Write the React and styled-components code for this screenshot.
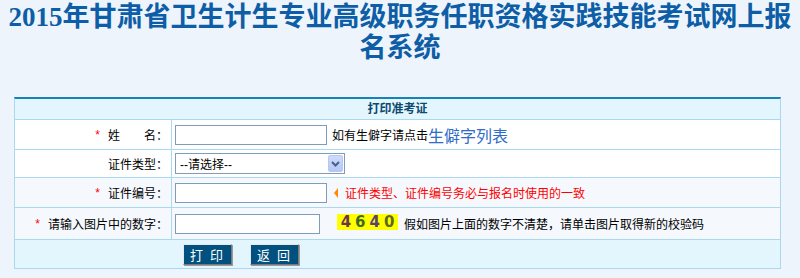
import styled, { createGlobalStyle } from "styled-components";

const GlobalStyle = createGlobalStyle`
  body {
    margin: 0;
    background: #edf4fb;
    font-family: "Liberation Sans", "Noto Sans CJK SC", sans-serif;
    font-size: 12px;
    color: #000;
  }
`;

const App = () => {
  return (
    <>
      <GlobalStyle />
      <Title>2015年甘肃省卫生计生专业高级职务任职资格实践技能考试网上报名系统</Title>
      <Panel>
        <HeadRow>打印准考证</HeadRow>

        <Row $h={29}>
          <Label><Star>*</Star>姓　　名：</Label>
          <Cell>
            <TextInput $w={152} />
            <Hint>如有生僻字请点击<RareLink href="#">生僻字列表</RareLink></Hint>
          </Cell>
        </Row>

        <Row $h={27}>
          <Label>证件类型：</Label>
          <Cell>
            <SelectBox>
              <span>--请选择--</span>
              <ArrowButton>
                <svg width="9" height="6" viewBox="0 0 9 6">
                  <path d="M1 1 L4.5 4.5 L8 1" fill="none" stroke="#4d5f86" strokeWidth="2" />
                </svg>
              </ArrowButton>
            </SelectBox>
          </Cell>
        </Row>

        <Row $h={29} $bg="#f5f9fe">
          <Label><Star>*</Star>证件编号：</Label>
          <Cell>
            <TextInput $w={152} />
            <Arrow />
            <Warning>证件类型、证件编号务必与报名时使用的一致</Warning>
          </Cell>
        </Row>

        <Row $h={31} $bg="#f5f9fe">
          <Label><Star>*</Star>请输入图片中的数字：</Label>
          <Cell>
            <TextInput $w={145} />
            <Captcha>
              <Digit $c="#6b3550">4</Digit>
              <Digit $c="#3f6a25">6</Digit>
              <Digit $c="#5b3f78">4</Digit>
              <Digit $c="#5c6a1c">0</Digit>
            </Captcha>
            <Note>假如图片上面的数字不清楚，请单击图片取得新的校验码</Note>
          </Cell>
        </Row>

        <ButtonRow>
          <Button>打 印</Button>
          <Button>返 回</Button>
        </ButtonRow>
      </Panel>
    </>
  );
};

const Title = styled.h1`
  margin: 0;
  padding-top: 2px;
  font-family: "Liberation Serif", "Noto Sans CJK SC", serif;
  font-size: 27px;
  line-height: 31px;
  font-weight: bold;
  color: #0d5ea6;
  text-align: center;
`;

const Panel = styled.div`
  width: 765px;
  margin: 33px 0 0 14px;
  border: 1px solid #a9d8ef;
  border-top: 2px solid #1582b9;
`;

const HeadRow = styled.div`
  height: 20px;
  line-height: 20px;
  background: #e4f6fd;
  border-bottom: 1px solid #a9d8ef;
  text-align: center;
  font-weight: bold;
  font-size: 12px;
  color: #0b4a70;
`;

const Row = styled.div`
  display: flex;
  height: ${p => p.$h}px;
  background: ${p => p.$bg || "#fff"};
  border-bottom: 1px solid #a9d8ef;
`;

const Label = styled.div`
  width: 157px;
  flex-shrink: 0;
  display: flex;
  align-items: center;
  justify-content: flex-end;
  padding-right: 3px;
  box-sizing: border-box;
  border-right: 1px solid #a9d8ef;
  white-space: nowrap;
`;

const Star = styled.span`
  color: #f00;
  margin-right: 8px;
  font-family: "Liberation Sans", sans-serif;
`;

const Cell = styled.div`
  flex: 1;
  display: flex;
  align-items: center;
  padding-left: 3px;
  white-space: nowrap;
`;

const TextInput = styled.input`
  width: ${p => p.$w}px;
  height: 20px;
  box-sizing: border-box;
  border: 1px solid #7f9db9;
  background: #fff;
  padding: 0 3px;
  font-size: 12px;
  outline: none;
`;

const Hint = styled.span`
  margin-left: 5px;
  display: flex;
  align-items: center;
`;

const RareLink = styled.a`
  color: #2f6bc7;
  font-size: 16px;
  text-decoration: none;
`;

const SelectBox = styled.div`
  position: relative;
  width: 170px;
  height: 21px;
  box-sizing: border-box;
  border: 1px solid #7f9db9;
  background: #fff;
  display: flex;
  align-items: center;
  padding-left: 4px;
`;

const ArrowButton = styled.span`
  position: absolute;
  right: 1px;
  top: 1px;
  width: 15px;
  height: 17px;
  box-sizing: border-box;
  border: 1px solid #b5c8f3;
  border-radius: 2px;
  background: linear-gradient(#cddbfc, #b4c7f5);
  display: flex;
  align-items: center;
  justify-content: center;
`;

const Arrow = styled.span`
  margin: 0 7px 0 7px;
  width: 0;
  height: 0;
  border-top: 5px solid transparent;
  border-bottom: 5px solid transparent;
  border-right: 4px solid #ff8a00;
`;

const Warning = styled.span`
  color: #f00;
`;

const Captcha = styled.span`
  margin: -4px 0 0 17px;
  width: 61px;
  height: 16px;
  background: #ffff00;
  display: flex;
  align-items: center;
  justify-content: center;
  gap: 4px;
  font-family: "DejaVu Sans", sans-serif;
  font-weight: bold;
  font-size: 15px;
`;

const Digit = styled.span`
  color: ${p => p.$c};
`;

const Note = styled.span`
  margin-left: 6px;
`;

const ButtonRow = styled.div`
  height: 28px;
  background: #e4f6fd;
  display: flex;
  align-items: center;
  gap: 18px;
  padding-left: 168px;
`;

const Button = styled.button`
  width: 49px;
  height: 21px;
  padding: 0;
  box-sizing: border-box;
  background: #00517f;
  color: #fff;
  font-family: "Noto Sans CJK SC", sans-serif;
  font-size: 13px;
  letter-spacing: 2px;
  border: 1px solid;
  border-color: #e8e8e8 #7a7a7a #7a7a7a #e8e8e8;
  box-shadow: 1px 1px 0 #9a9a9a;
  cursor: pointer;
`;

export default App;
